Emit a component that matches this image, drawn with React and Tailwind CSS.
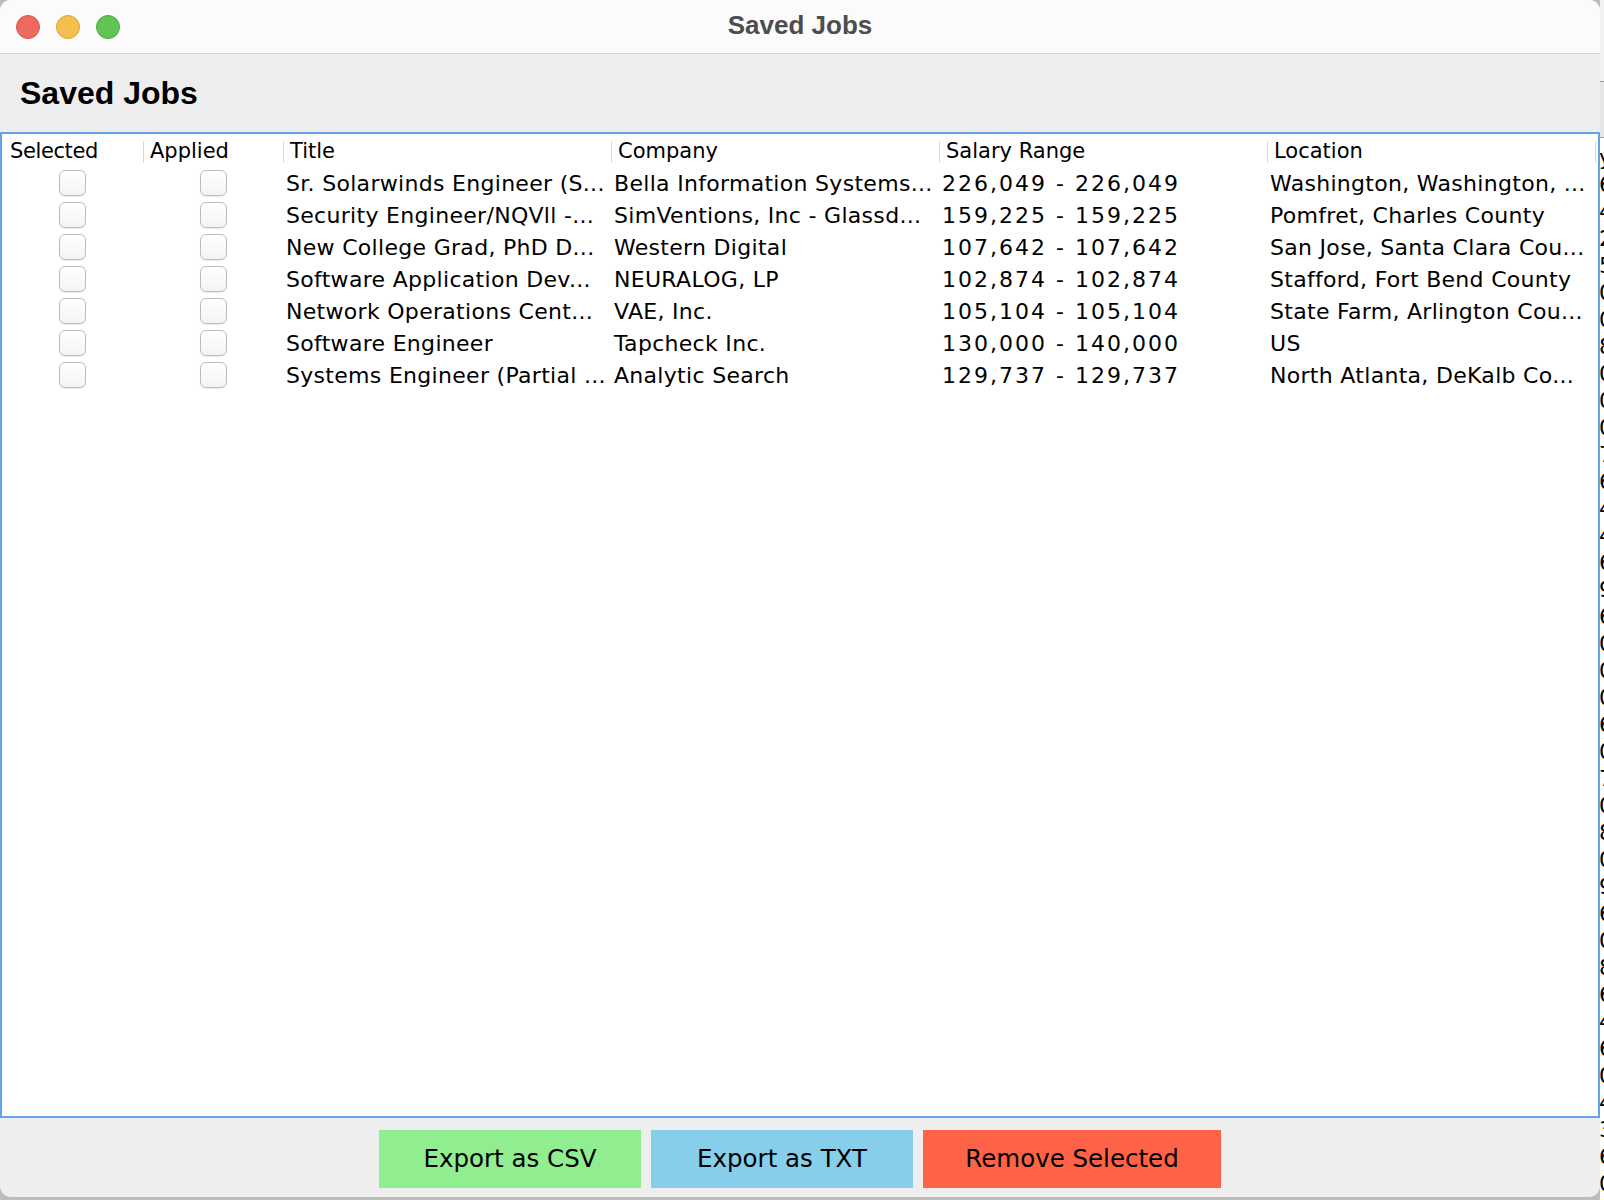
import React from "react";

const rows = [
  ["Sr. Solarwinds Engineer (S...", "Bella Information Systems...", "226,049 - 226,049", "Washington, Washington, ..."],
  ["Security Engineer/NQVll -...", "SimVentions, Inc - Glassd...", "159,225 - 159,225", "Pomfret, Charles County"],
  ["New College Grad, PhD D...", "Western Digital", "107,642 - 107,642", "San Jose, Santa Clara Cou..."],
  ["Software Application Dev...", "NEURALOG, LP", "102,874 - 102,874", "Stafford, Fort Bend County"],
  ["Network Operations Cent...", "VAE, Inc.", "105,104 - 105,104", "State Farm, Arlington Cou..."],
  ["Software Engineer", "Tapcheck Inc.", "130,000 - 140,000", "US"],
  ["Systems Engineer (Partial ...", "Analytic Search", "129,737 - 129,737", "North Atlanta, DeKalb Co..."],
];

const sideDigits = "y64250080007644696000607080960864604360".split("");

function Checkbox() {
  return (
    <div className="w-[27px] h-[26px] rounded-[6px] border border-[#bcbcbc] bg-gradient-to-b from-white to-[#f4f4f4] shadow-[0_1px_1px_rgba(0,0,0,0.08)]" />
  );
}

function HeaderCell({ w, label, first }) {
  return (
    <div className={`${w} h-full flex items-center shrink-0`}>
      {first ? null : <span className="w-px h-[22px] bg-[#d9d9d9] shrink-0" />}
      <span className={first ? "pl-[8px] tracking-[-0.4px]" : "pl-[6px]"}>{label}</span>
    </div>
  );
}

export default function App() {
  return (
    <div className="w-[1604px] h-[1200px] bg-[#bdbdbd] flex overflow-hidden font-['DejaVu_Sans',sans-serif] text-black">
      <div className="w-[1600px] h-[1197px] shrink-0 rounded-[11px] overflow-hidden flex flex-col bg-[#eeeeee]">
        {/* title bar */}
        <div className="h-[54px] shrink-0 bg-[#fbfbfb] border-b border-[#d3d3d3] grid grid-cols-[1fr_auto_1fr] items-center">
          <div className="flex items-center gap-[16px] pl-[16px]">
            <span className="w-[24px] h-[24px] rounded-full bg-[#ee6a5f] border border-[#d8574d]" />
            <span className="w-[24px] h-[24px] rounded-full bg-[#f5bf4f] border border-[#d9a33c]" />
            <span className="w-[24px] h-[24px] rounded-full bg-[#61c454] border border-[#4fa843]" />
          </div>
          <div className="font-['Liberation_Sans',sans-serif] font-bold text-[26px] text-[#4d4d4d] leading-none pb-[3px]">
            Saved Jobs
          </div>
          <div />
        </div>

        {/* header panel */}
        <div className="h-[78px] shrink-0 flex items-center pl-[20px]">
          <h1 className="font-['Liberation_Sans',sans-serif] font-bold text-[32px] leading-none">Saved Jobs</h1>
        </div>

        {/* table */}
        <div className="flex-1 border-2 border-[#64a4e6] bg-white flex flex-col overflow-hidden pt-[2px]">
          <div className="h-[31px] shrink-0 flex text-[21px] leading-[31px]">
            <HeaderCell w="w-[141px]" label="Selected" first />
            <HeaderCell w="w-[140px]" label="Applied" />
            <HeaderCell w="w-[328px]" label="Title" />
            <HeaderCell w="w-[328px]" label="Company" />
            <HeaderCell w="w-[328px]" label="Salary Range" />
            <HeaderCell w="w-[328px]" label="Location" />
            <div className="flex-1 h-full flex items-center">
              <span className="w-px h-[22px] bg-[#d9d9d9]" />
            </div>
          </div>
          {rows.map((r, i) => (
            <div key={i} className="h-[32px] shrink-0 flex items-center text-[22px] leading-[32px] tracking-[0.3px] whitespace-nowrap">
              <div className="w-[141px] h-full shrink-0 flex items-center justify-center">
                <Checkbox />
              </div>
              <div className="w-[140px] h-full shrink-0 flex items-center justify-center">
                <Checkbox />
              </div>
              <div className="w-[328px] shrink-0 pl-[3px] pt-[2px] overflow-hidden">{r[0]}</div>
              <div className="w-[328px] shrink-0 pl-[3px] pt-[2px] overflow-hidden">{r[1]}</div>
              <div className="w-[328px] shrink-0 pl-[3px] pt-[2px] overflow-hidden tracking-[2px]">{r[2]}</div>
              <div className="w-[328px] shrink-0 pl-[3px] pt-[2px] overflow-hidden">{r[3]}</div>
            </div>
          ))}
        </div>

        {/* footer */}
        <div className="h-[79px] shrink-0 flex justify-center items-start gap-[10px] pt-[12px] text-[24.5px]">
          <button className="w-[262px] h-[58px] bg-[#90ee90] flex items-center justify-center">Export as CSV</button>
          <button className="w-[262px] h-[58px] bg-[#87ceeb] flex items-center justify-center">Export as TXT</button>
          <button className="w-[298px] h-[58px] bg-[#ff6347] flex items-center justify-center">Remove Selected</button>
        </div>
      </div>

      {/* sliver of the window behind */}
      <div className="w-[4px] h-[1200px] shrink-0 bg-white flex flex-col overflow-hidden">
        <div className="h-[82px] shrink-0 bg-[#f2f2f2] border-b border-[#9e9e9e]" />
        <div className="h-[56px] shrink-0 bg-[#e6e6e6] border-b border-[#9e9e9e]" />
        <div className="flex flex-col text-[22px] leading-[27px] pt-[6px] -ml-[1px]">
          {sideDigits.map((d, i) => (
            <span key={i}>{d}</span>
          ))}
        </div>
      </div>
    </div>
  );
}
